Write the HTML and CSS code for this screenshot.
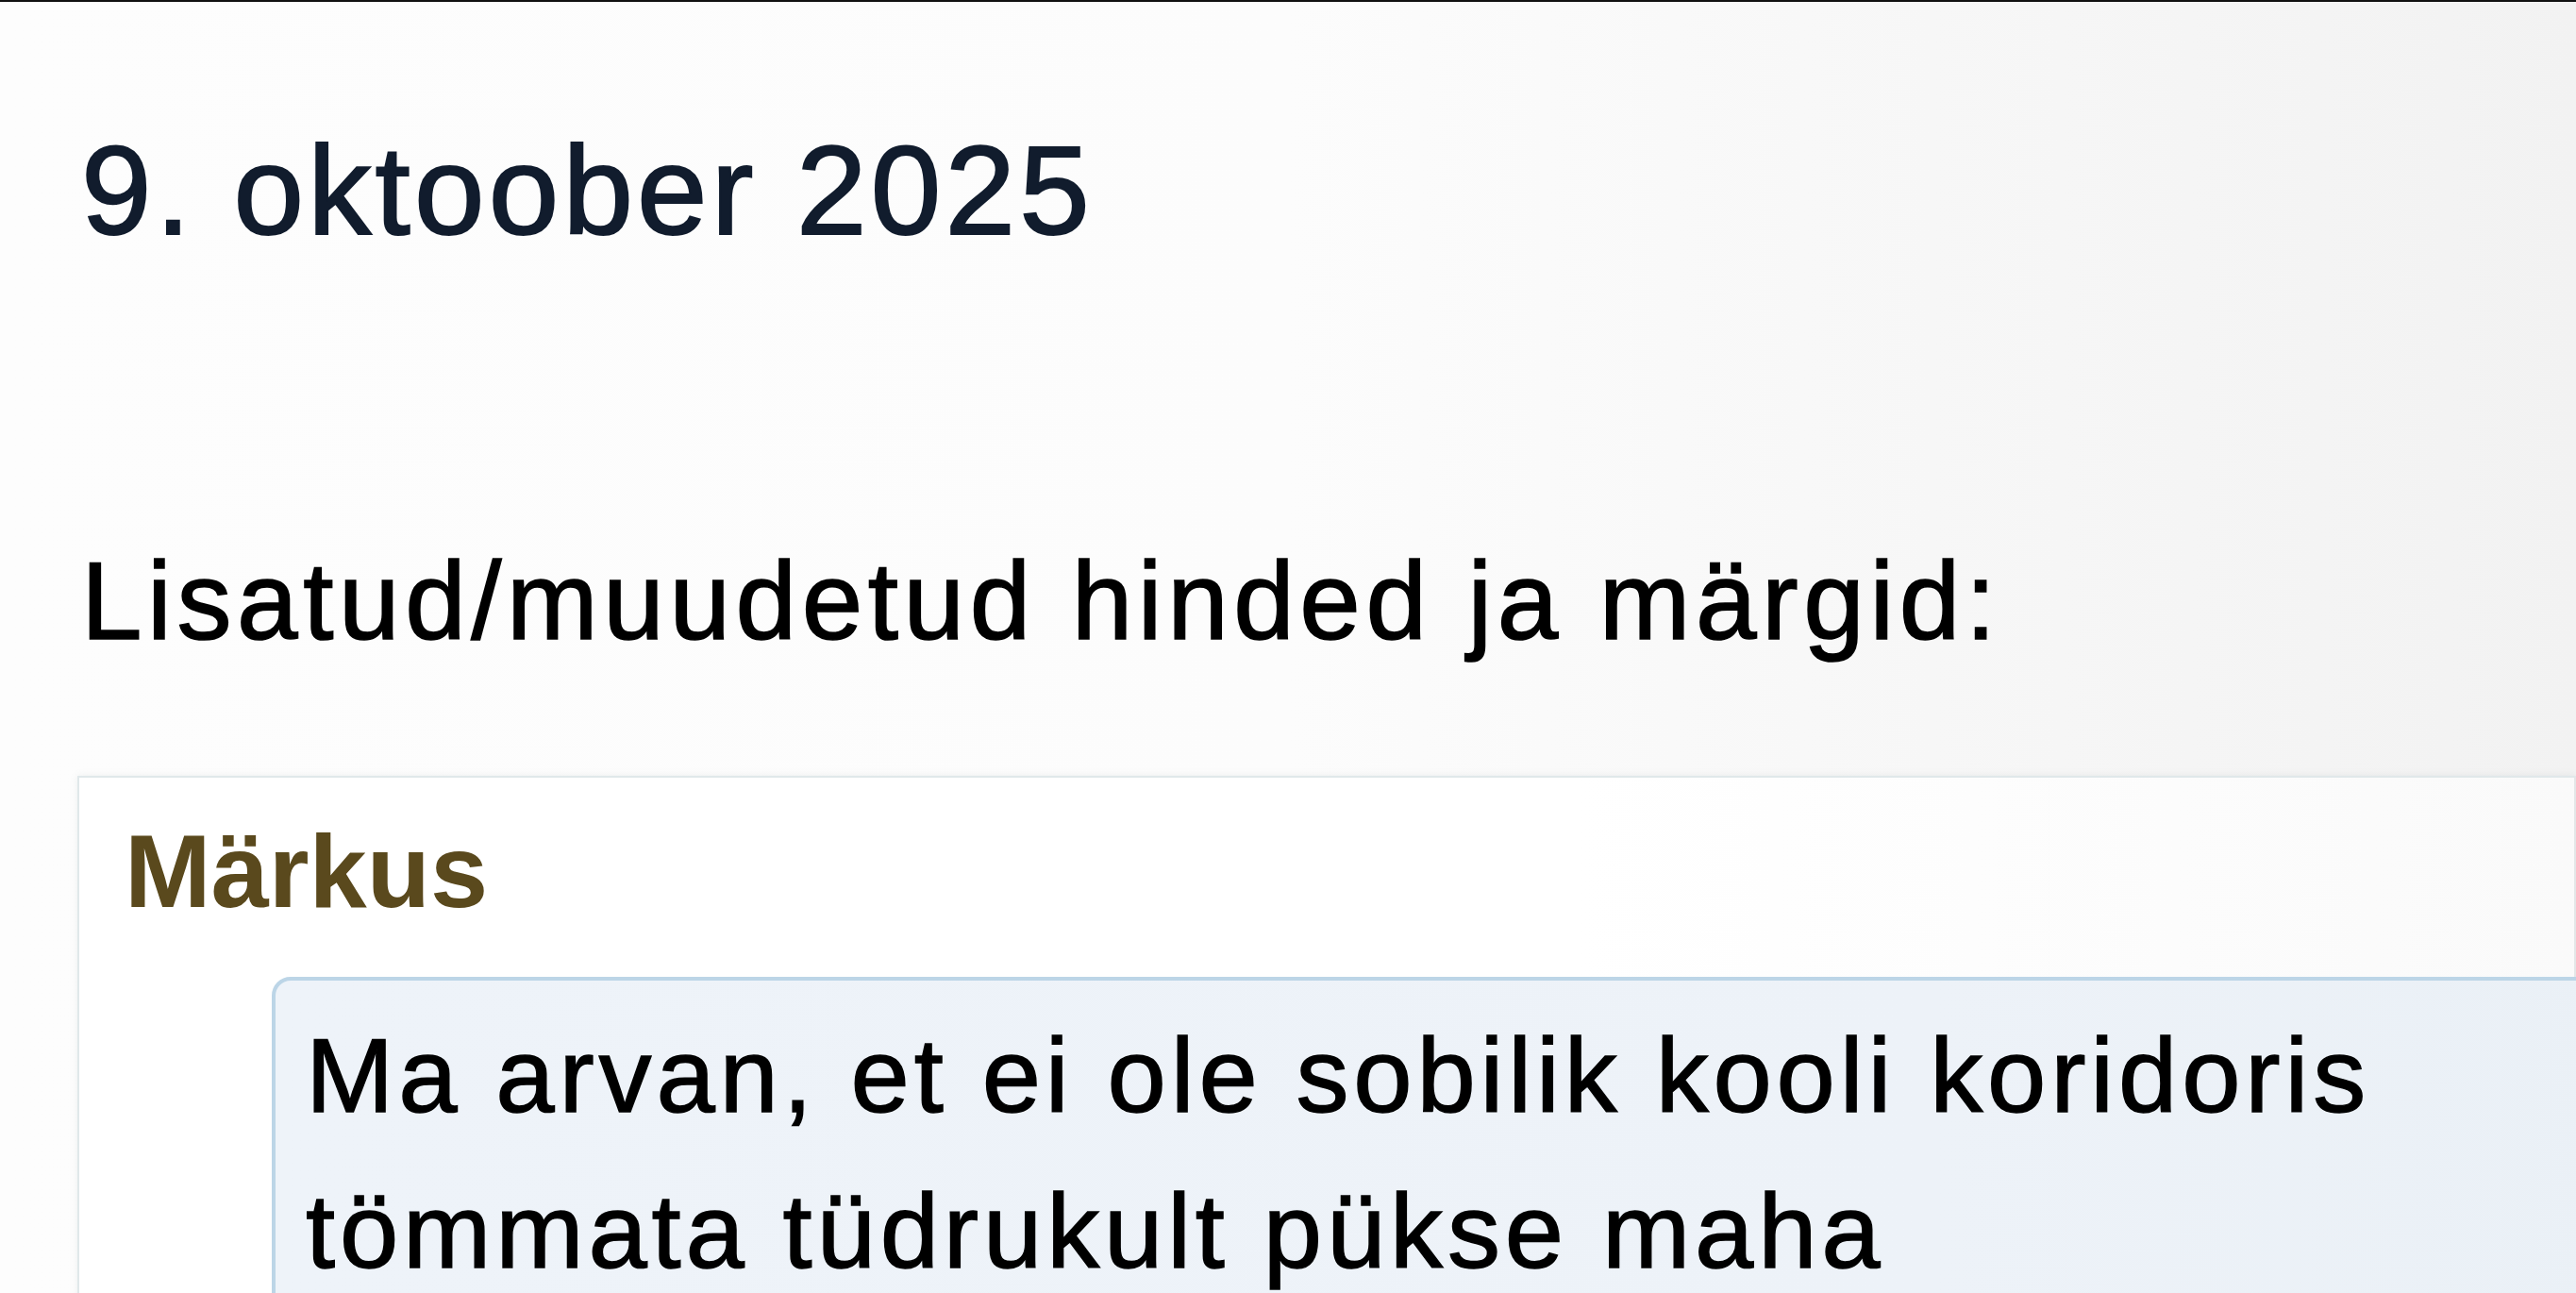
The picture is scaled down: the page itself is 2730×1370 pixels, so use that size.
FILE: index.html
```html
<!DOCTYPE html>
<html lang="et">
<head>
    <meta charset="UTF-8">
    <meta name="viewport" content="width=device-width, initial-scale=1.0">
    <title>Hinded ja märgid</title>
    <link rel="stylesheet" href="styles.css">
</head>
<body>
    <div class="page">
        <h1 class="date">9. oktoober 2025</h1>
        <h2 class="section-title">Lisatud/muudetud hinded ja märgid:</h2>
        <div class="entry">
            <div class="entry-type">Märkus</div>
            <div class="entry-comment">
                <p>Ma arvan, et ei ole sobilik kooli koridoris tömmata tüdrukult pükse maha</p>
            </div>
        </div>
    </div>
</body>
</html>
```

FILE: styles.css
```css
html, body {
    margin: 0;
    padding: 0;
    height: 100%;
    overflow: hidden;
}
body {
    font-family: "Liberation Sans", Arial, sans-serif;
    color: #000;
    background: linear-gradient(to right, #fdfdfd 0%, #fcfcfc 50%, #f2f2f2 100%);
    border-top: 2px solid #111;
}
.page {
    padding: 120px 0 0 86px;
}
.date {
    margin: 0;
    font-size: 134px;
    line-height: 160px;
    font-weight: normal;
    letter-spacing: 4.2px;
    color: #111c2d;
    -webkit-text-stroke: 2px #111c2d;
}
.section-title {
    margin: 285px 0 0 0;
    font-size: 116px;
    line-height: 140px;
    font-weight: normal;
    letter-spacing: 5.6px;
    color: #000;
    -webkit-text-stroke: 1.6px #000;
}
/* kaart märkusega */
.entry {
    margin: 115px 0 0 -4px;
    padding: 34px 0 0 48px;
    height: 600px;
    background: linear-gradient(to right, #ffffff 60%, #fafafa 100%);
    border: 2px solid #e0e8ea;
    border-right-color: #e4e7e8;
    box-shadow: 0 0 8px rgba(120, 140, 140, 0.12);
}
.entry-type {
    font-size: 110px;
    line-height: 130px;
    font-weight: bold;
    color: #5a491d;
}
.entry-comment {
    margin: 47px -80px 0 156px;
    padding: 18px 0 0 32px;
    height: 500px;
    background: linear-gradient(to right, #eef3f9 0%, #edf2f8 70%, #eaf0f6 100%);
    border: 4px solid #bcd5e7;
    border-radius: 20px;
}
.entry-comment p {
    margin: 0;
    max-width: 2300px;
    font-size: 112px;
    line-height: 165px;
    letter-spacing: 4.85px;
    color: #000;
    -webkit-text-stroke: 1.4px #000;
}
```
